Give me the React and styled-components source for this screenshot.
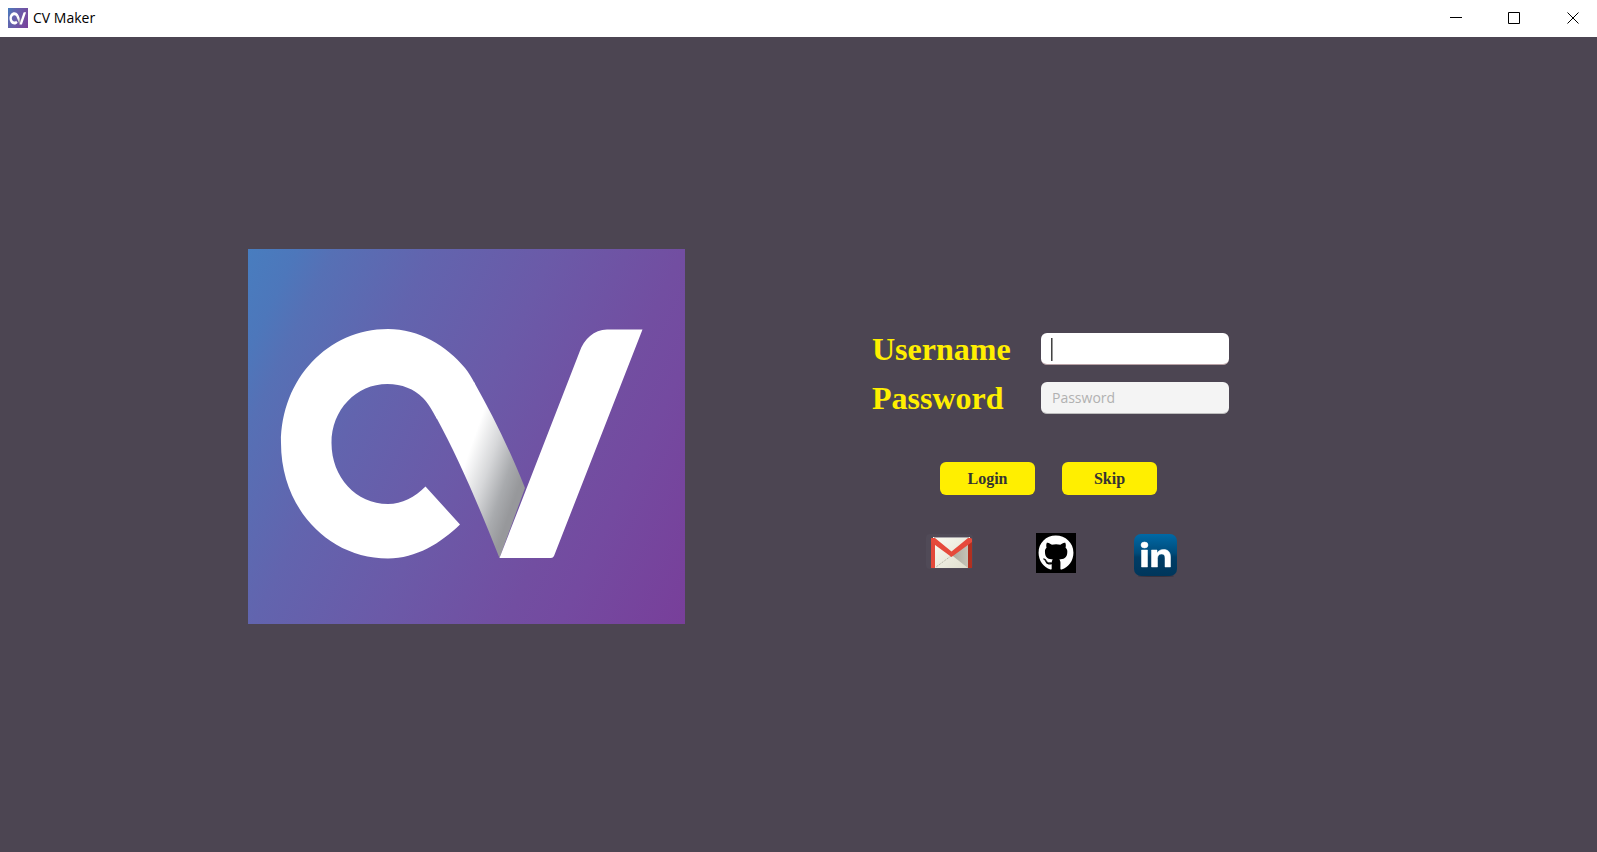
import React from "react";
import styled, { createGlobalStyle } from "styled-components";
import { FaGithub } from "react-icons/fa";

const GlobalStyle = createGlobalStyle`
  *, *::before, *::after { box-sizing: border-box; }
  body {
    margin: 0;
    background: #4c4552;
    font-family: "Open Sans", "Noto Sans", sans-serif;
  }
`;

const Window = styled.div`
  display: flex;
  flex-direction: column;
  min-height: 100vh;
`;

const TitleBar = styled.header`
  display: flex;
  align-items: center;
  height: 37px;
  padding: 0 17px 2px 8px;
  background: #fff;
  color: #000;
`;

const Title = styled.h1`
  flex: 1;
  margin: 0 0 0 5px;
  font-size: 14px;
  line-height: 20px;
  font-weight: 400;
`;

const WindowControls = styled.div`
  display: flex;
  gap: 46px;
`;

const WindowButton = styled.button`
  display: flex;
  padding: 0;
  border: 0;
  background: none;
  color: #000;
`;

const Content = styled.main`
  flex: 1;
  display: grid;
  grid-template-columns: 248fr auto 187fr auto 368fr;
  align-items: center;
  padding-bottom: 16px;
`;

const LogoArea = styled.div`
  display: flex;
  grid-column: 2;
`;

const LoginForm = styled.form`
  grid-column: 4;
  margin-top: 38px;
`;

const Fields = styled.div`
  display: grid;
  grid-template-columns: 139px 188px;
  column-gap: 30px;
  row-gap: 17px;
  align-items: center;
`;

const FieldLabel = styled.label`
  color: #ffef00;
  font: 700 32px/32px "Liberation Serif", serif;
`;

const TextField = styled.input`
  width: 100%;
  height: 32px;
  padding: 0 11px;
  border: 0;
  border-bottom: 1px solid ${(p) => (p.$active ? "#b9a2a6" : "#bdbdbd")};
  border-radius: 6px;
  outline: 0;
  background-color: ${(p) => (p.$active ? "#fff" : "#f4f4f4")};
  color: #333;
  font: 400 14px/20px "Open Sans", "Noto Sans", sans-serif;

  &::placeholder {
    color: #b1b1b1;
    opacity: 1;
  }

  /* steady caret while the active field is empty */
  &:placeholder-shown {
    caret-color: transparent;
    background-image: ${(p) =>
      p.$active ? "linear-gradient(90deg, #444 50%, #999 50%)" : "none"};
    background-repeat: no-repeat;
    background-position: 10px 5px;
    background-size: 2px 23px;
  }
`;

const Actions = styled.div`
  display: flex;
  gap: 27px;
  margin-top: 48px;
  padding-left: 68px;
`;

const ActionButton = styled.button`
  width: 95px;
  height: 33px;
  padding: 0;
  border: 0;
  border-radius: 6px;
  background: #ffef00;
  color: #333;
  font: 700 16px/20px "Liberation Serif", serif;
`;

const SocialLinks = styled.nav`
  display: flex;
  align-items: flex-start;
  gap: 58px;
  margin-top: 38px;
  padding-left: 54px;
`;

const SocialLink = styled.a`
  display: flex;
`;

const GithubTile = styled.span`
  display: flex;
  align-items: center;
  justify-content: center;
  width: 40px;
  height: 40px;
  background: #000;
  color: #fff;
`;

function CvLogo({ id, width, height }) {
  return (
    <svg
      width={width}
      height={height}
      viewBox="0 0 437 375"
      preserveAspectRatio="none"
      role="img"
      aria-label="CV Maker logo"
    >
      <defs>
        <linearGradient id={`${id}-bg`} gradientUnits="userSpaceOnUse" x1="0" y1="0" x2="500" y2="238">
          <stop offset="0" stopColor="#487dbf" />
          <stop offset="0.08" stopColor="#4d77bb" />
          <stop offset="0.14" stopColor="#5670b5" />
          <stop offset="0.3" stopColor="#6264ae" />
          <stop offset="0.5" stopColor="#6b5aa8" />
          <stop offset="0.71" stopColor="#724ea1" />
          <stop offset="0.8" stopColor="#744aa0" />
          <stop offset="1" stopColor="#783f9a" />
        </linearGradient>
        <linearGradient id={`${id}-fold`} gradientUnits="userSpaceOnUse" x1="220" y1="206" x2="275" y2="225">
          <stop offset="0" stopColor="#fff" />
          <stop offset="0.4" stopColor="#d6d7d9" />
          <stop offset="0.75" stopColor="#a9abae" />
          <stop offset="1" stopColor="#97989b" />
        </linearGradient>
      </defs>
      <rect width="437" height="375" fill={`url(#${id}-bg)`} />
      <path
        d="M212 275.500C193 294 168 309.500 140 309.500C80 309.500 33 259 33 194C33 130 80 80 140 80C171 80 199 97 217 119C221 124 224 129 227 135L189 170C183 160 181 155 175 149C166 140 154 135 139.500 135C108 135 83.500 161 83.500 194C83.500 228 108 255 140 255C154 255 167 248 177.500 237.500Z"
        fill="#fff"
      />
      <path
        d="M226 133C245 167 261 199 277 239L251.500 309C230 255 211 210 188 168Z"
        fill={`url(#${id}-fold)`}
      />
      <path
        d="M251.500 309L331.500 103C336 90 346 80.500 359 80.500H394.500L306 307Q305 309 303 309Z"
        fill="#fff"
      />
    </svg>
  );
}

function GmailIcon() {
  return (
    <svg width="52" height="38" viewBox="0 0 52 38" aria-hidden="true">
      <defs>
        <linearGradient id="paper" x1="0" y1="0" x2="1" y2="1">
          <stop offset="0" stopColor="#fbfbf2" />
          <stop offset="1" stopColor="#deddcc" />
        </linearGradient>
        <linearGradient id="shade" x1="0" y1="0" x2="1" y2="0">
          <stop offset="0" stopColor="#aaa99d" />
          <stop offset="1" stopColor="#c5c4b7" />
        </linearGradient>
      </defs>
      <rect y="1" width="47" height="35" rx="4" fill="#504a57" />
      <rect x="7" y="4" width="37" height="31" fill="url(#paper)" />
      <path d="M8 4.500H43" stroke="#aaa7ac" />
      <path d="M25.500 22L42 9V35Z" fill="url(#shade)" />
      <path d="M25 23L10 34" stroke="#aaa99b" strokeDasharray="1 1" fill="none" />
      <path d="M5 6Q5 5 6 5H9V35H5Z" fill="#e2483a" />
      <path d="M42 8H46V35H42Z" fill="#b13020" />
      <path d="M5 5H9L25.500 18.500L42 5H45L46 6V9L25.500 24L5 9Z" fill="#e64a3b" />
    </svg>
  );
}

function LinkedinIcon() {
  return (
    <svg width="44" height="45" viewBox="0 0 44 45" aria-hidden="true">
      <defs>
        <linearGradient id="linkedin" x1="0" y1="0" x2="0" y2="1">
          <stop offset="0" stopColor="#0069a6" />
          <stop offset="0.45" stopColor="#004c7b" />
          <stop offset="0.55" stopColor="#003d66" />
          <stop offset="1" stopColor="#00365b" />
        </linearGradient>
      </defs>
      <ellipse cx="22" cy="43" rx="18" ry="1" fill="#37313c" />
      <rect y="1" width="43" height="42" rx="7" fill="url(#linkedin)" />
      <g fill="#fff" stroke="#fff" strokeWidth="0.5">
        <ellipse cx="10.500" cy="12" rx="3.500" ry="3" />
        <path d="M7.500 17H13.500V34H7.500ZM17.500 17H23V20C24.500 17.700 26.500 16.500 29.500 16.500C34 16.500 36.500 19 36.500 24V34H31V25C31 22.300 30 21 27.500 21C25 21 23.500 22.800 23.500 25.500V34H17.500Z" />
      </g>
    </svg>
  );
}

const controls = [
  { label: "Minimize", path: "M1 5.500H13" },
  { label: "Maximize", path: "M.5.500H11.500V11.500H.5Z" },
  { label: "Close", path: "M.5.500L11.500 11.500M11.500.500L.5 11.500" },
];

export default function App() {
  return (
    <Window>
      <GlobalStyle />
      <TitleBar>
        <CvLogo id="small" width={20} height={20} />
        <Title>CV Maker</Title>
        <WindowControls>
          {controls.map(({ label, path }) => (
            <WindowButton key={label} type="button" aria-label={label}>
              <svg width="13" height="12" viewBox="0 0 13 12" fill="none" stroke="currentColor">
                <path d={path} />
              </svg>
            </WindowButton>
          ))}
        </WindowControls>
      </TitleBar>
      <Content>
        <LogoArea>
          <CvLogo id="large" width={437} height={375} />
        </LogoArea>
        <LoginForm onSubmit={(e) => e.preventDefault()}>
          <Fields>
            <FieldLabel htmlFor="username">Username</FieldLabel>
            <TextField id="username" type="text" placeholder=" " autoFocus $active />
            <FieldLabel htmlFor="password">Password</FieldLabel>
            <TextField id="password" type="password" placeholder="Password" />
          </Fields>
          <Actions>
            <ActionButton type="submit">Login</ActionButton>
            <ActionButton type="button">Skip</ActionButton>
          </Actions>
          <SocialLinks aria-label="Contact">
            <SocialLink href="#gmail" aria-label="Gmail">
              <GmailIcon />
            </SocialLink>
            <SocialLink href="#github" aria-label="GitHub">
              <GithubTile>
                <FaGithub size={36} />
              </GithubTile>
            </SocialLink>
            <SocialLink href="#linkedin" aria-label="LinkedIn">
              <LinkedinIcon />
            </SocialLink>
          </SocialLinks>
        </LoginForm>
      </Content>
    </Window>
  );
}
